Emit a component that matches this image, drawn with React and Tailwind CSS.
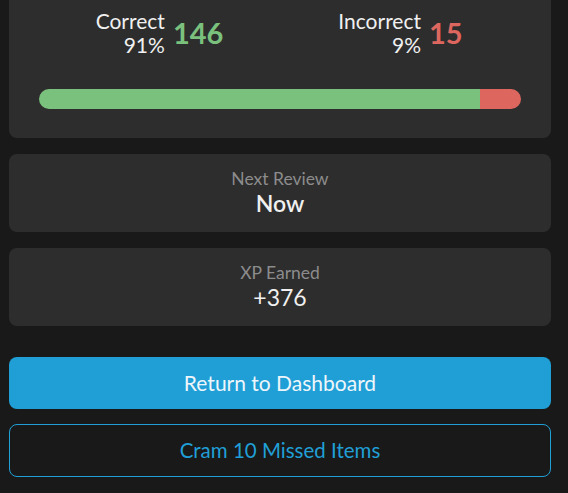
export default function App() {
  return (
    <div className="min-h-[493px] w-[568px] bg-[#191919] pl-[9px] pr-[17px] pb-4 text-[#f0f0f0]" style={{ fontFamily: "Lato, 'Noto Sans', sans-serif" }}>
      <div className="flex flex-col">
        <div className="rounded-b-lg bg-[#2d2d2d] px-[30px] pt-[9px] pb-[29px]">
          <div className="flex">
            <div className="flex flex-1 items-center justify-center gap-2">
              <div className="flex flex-col items-end text-[21px] leading-[24px]">
                <span>Correct</span>
                <span>91%</span>
              </div>
              <span className="text-[29px] font-bold text-[#7bc17e]">146</span>
            </div>
            <div className="flex flex-1 items-center justify-center gap-2">
              <div className="flex flex-col items-end text-[21px] leading-[24px]">
                <span>Incorrect</span>
                <span>9%</span>
              </div>
              <span className="text-[29px] font-bold text-[#dd665f]">15</span>
            </div>
          </div>
          <div className="mt-[32px] flex h-[20px] overflow-hidden rounded-full">
            <div className="h-full bg-[#7bc17e]" style={{ width: "91.5%" }} />
            <div className="h-full flex-1 bg-[#dd665f]" />
          </div>
        </div>
        <div className="mt-4 flex h-[78px] flex-col items-center justify-center rounded-lg bg-[#2d2d2d]">
          <span className="text-[17.5px] leading-[20px] text-[#8c8c8c]">Next Review</span>
          <span className="text-[23px] leading-[28px] font-semibold">Now</span>
        </div>
        <div className="mt-4 flex h-[78px] flex-col items-center justify-center rounded-lg bg-[#2d2d2d]">
          <span className="text-[17.5px] leading-[20px] text-[#8c8c8c]">XP Earned</span>
          <span className="text-[23px] leading-[28px]">+376</span>
        </div>
        <button className="mt-[31px] flex h-[52px] items-center justify-center rounded-lg bg-[#209fd6] text-[21px] text-[#eef6fb]">
          Return to Dashboard
        </button>
        <button className="mt-[15px] flex h-[53px] items-center justify-center rounded-lg border border-[#209fd6] bg-transparent text-[20.5px] text-[#209fd6]">
          Cram 10 Missed Items
        </button>
      </div>
    </div>
  );
}
